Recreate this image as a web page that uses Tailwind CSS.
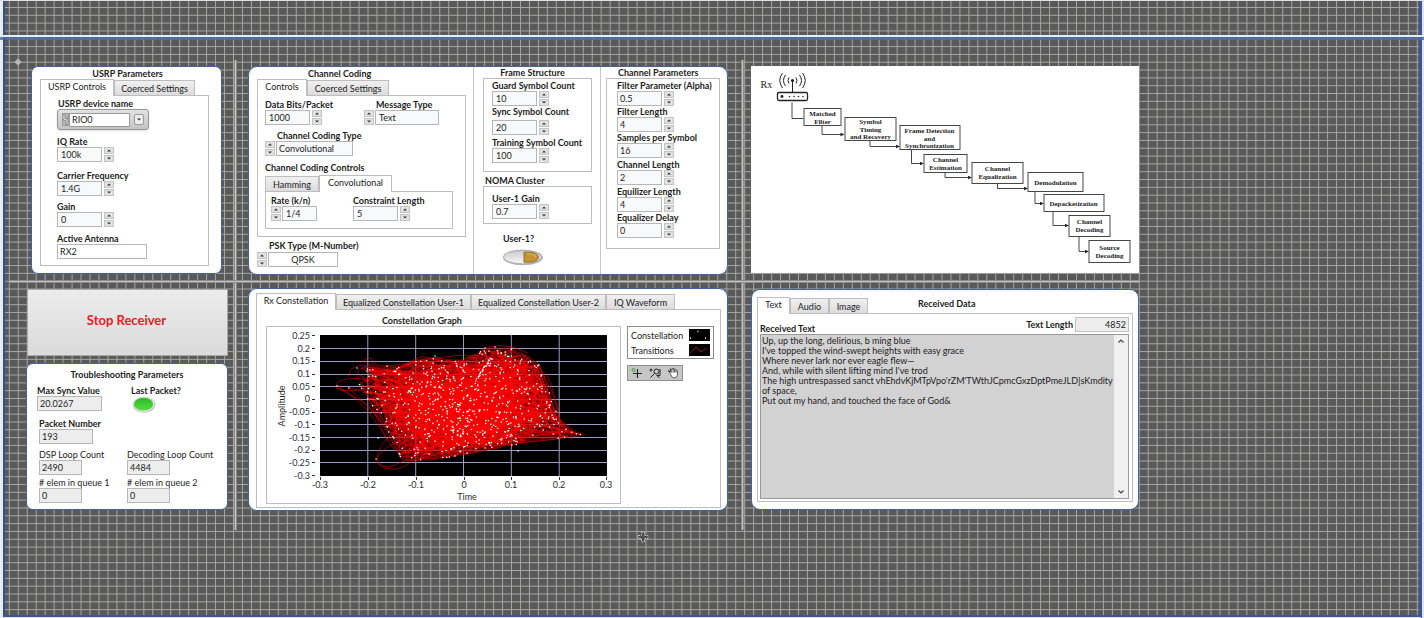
<!DOCTYPE html>
<html lang="en">
<head>
<meta charset="utf-8">
<title>NOMA Receiver</title>
<script src="https://cdn.jsdelivr.net/npm/@tailwindcss/browser@4"></script>
</head>
<body class="relative min-h-screen overflow-x-hidden bg-[#595959] font-['Lato','Open_Sans',sans-serif] text-[9px] leading-[11px] text-[#1c1c1c]">

<!-- front panel grid -->
<svg id="grid" class="absolute inset-0 h-full w-full" aria-hidden="true">
  <path id="gridLines" stroke="#a6a6a4" stroke-width="1" fill="none"/>
</svg>
<div class="absolute inset-y-0 left-0 w-[3px] bg-[#e9ebee]" aria-hidden="true"></div>
<div class="absolute inset-y-0 left-[3px] w-[2px] bg-[#34508f]" aria-hidden="true"></div>
<div class="absolute inset-y-0 right-0 w-[2px] bg-[#dfe3ea]" aria-hidden="true"></div>
<div class="absolute inset-y-0 right-[2px] w-[3px] bg-[#3d5796]" aria-hidden="true"></div>
<div class="absolute inset-x-0 top-0 h-px bg-[#dcdfe3]" aria-hidden="true"></div>
<div class="absolute inset-x-0 top-[35px] h-[5px] border-t-2 border-[#e6efff] bg-[#4a66a4]/80" aria-hidden="true"></div>
<div class="absolute inset-x-[3px] bottom-0 h-[3px] border-b border-[#dfe3ea] bg-[#3d5796]" aria-hidden="true"></div>

<svg class="absolute left-[14px] top-[58px] h-[8px] w-[8px]" viewBox="0 0 8 8" aria-hidden="true"><path d="M4 0.5L7.5 4L4 7.5L0.5 4Z" fill="#b9bbbb"/></svg>

<svg class="hidden" aria-hidden="true">
  <symbol id="up" viewBox="0 0 8 5"><path d="M2 3.500L4 1.500L6 3.500Z" fill="#333"/></symbol>
  <symbol id="dn" viewBox="0 0 8 5"><path d="M2 1.500L4 3.500L6 1.500Z" fill="#333"/></symbol>
</svg>

<main class="relative grid grid-cols-[209fr_3px_504fr_3px_395fr_285fr] grid-rows-[220px_3px_247px] pt-[60px] pl-[25px]">
  <div class="col-start-2 row-span-3 row-start-1 border-x border-[#8b8b8b] bg-[#c4c4c4]" aria-hidden="true"></div>
  <div class="col-start-4 row-span-3 row-start-1 border-x border-[#8b8b8b] bg-[#c4c4c4]" aria-hidden="true"></div>
  <div class="col-span-5 col-start-1 row-start-2 -ml-[16px] border-y border-[#8b8b8b] bg-[#c4c4c4]" aria-hidden="true"></div>

  <!-- USRP parameters -->
  <section class="col-start-1 row-start-1 pt-[6px] pr-[12px] pl-[6px]">
    <div class="h-[208px] rounded-[7px] border border-[#4562a0] bg-white px-[8px] pt-px">
      <h2 class="pl-[2px] text-center font-bold">USRP Parameters</h2>
      <div class="flex items-end" role="tablist">
        <button role="tab" aria-selected="true" class="relative z-10 -mb-px h-[17px] w-[74px] border border-b-0 border-[#bdbdbd] bg-white pb-[3px]">USRP Controls</button>
        <button role="tab" class="h-[15px] w-[81px] border border-b-0 border-[#bdbdbd] bg-linear-to-b from-[#f0f0f0] to-[#dcdcdc]">Coerced Settings</button>
      </div>
      <div class="mr-[4px] h-[171px] border border-[#bdbdbd] pt-[2px] pl-[16px]">
        <label for="dev" class="block pl-px font-bold">USRP device name</label>
        <div class="flex h-[21px] w-[92px] items-center rounded-[3px] border border-[#969696] bg-linear-to-b from-[#e2e2e2] to-[#c4c4c4] pl-[4px] shadow">
          <svg class="h-[13px] w-[8px]" viewBox="0 0 8 13" aria-hidden="true"><rect width="8" height="13" fill="#9b9b9b"/><path d="M2 2v4l3 1v4M5 1v3M2 8v4" stroke="#d8d8d8" fill="none"/></svg>
          <input id="dev" value="RIO0" class="h-[14px] w-[60px] border border-l-0 border-[#9c9c9c] bg-white pl-[2px]">
          <button aria-label="Choose device" class="ml-[4px] flex h-[11px] w-[10px] items-center justify-center rounded-[2px] border border-[#999] bg-[#eeeeee]"><svg class="h-[5px] w-[8px] shrink-0"><use href="#dn"/></svg></button>
        </div>
        <label for="iq" class="mt-[6px] block font-bold">IQ Rate</label>
        <div class="flex gap-[2px]"><input id="iq" value="100k" class="h-[15px] w-[45px] border border-[#b6b6b6] bg-[#f8f9fa] px-[3px]"><span data-spin></span></div>
        <label for="cf" class="mt-[8px] block font-bold">Carrier Frequency</label>
        <div class="flex gap-[2px]"><input id="cf" value="1.4G" class="h-[15px] w-[45px] border border-[#b6b6b6] bg-[#f8f9fa] px-[3px]"><span data-spin></span></div>
        <label for="gain" class="mt-[5px] block font-bold">Gain</label>
        <div class="flex gap-[2px]"><input id="gain" value="0" class="h-[15px] w-[45px] border border-[#b6b6b6] bg-[#f8f9fa] px-[3px]"><span data-spin></span></div>
        <label for="ant" class="mt-[6px] block font-bold">Active Antenna</label>
        <input id="ant" value="RX2" class="block h-[15px] w-[90px] border border-[#b6b6b6] bg-white px-[2px]">
      </div>
    </div>
  </section>

  <!-- Channel coding, frame structure, channel parameters -->
  <section class="col-start-3 row-start-1 pt-[6px] pr-[13px] pl-[11px]">
    <div class="grid h-[209px] grid-cols-[minmax(0,224fr)_minmax(0,127fr)_minmax(0,127fr)] rounded-[9px] border border-[#4562a0] bg-white">
      <div class="pt-px pr-[7px] pl-[8px]">
        <h2 class="pl-[51px] font-bold">Channel Coding</h2>
        <div class="flex items-end" role="tablist">
          <button role="tab" aria-selected="true" class="relative z-10 -mb-px h-[17px] w-[50px] border border-b-0 border-[#bdbdbd] bg-white pb-[3px]">Controls</button>
          <button role="tab" class="h-[15px] w-[82px] border border-b-0 border-[#bdbdbd] bg-linear-to-b from-[#f0f0f0] to-[#dcdcdc]">Coerced Settings</button>
        </div>
        <div class="h-[142px] border border-[#bdbdbd] pt-[3px] pl-[7px]">
          <div class="flex">
            <div class="w-[99px]">
              <label for="bits" class="block font-bold">Data Bits/Packet</label>
              <div class="flex gap-[2px]"><input id="bits" value="1000" class="h-[15px] w-[45px] border border-[#b6b6b6] bg-[#f8f9fa] px-[3px]"><span data-spin></span></div>
            </div>
            <div>
              <label for="msg" class="block pl-[12px] font-bold">Message Type</label>
              <div class="flex gap-px"><span data-spin></span><input id="msg" value="Text" class="h-[15px] w-[64px] border border-[#b6b6b6] bg-[#f8f9fa] px-[3px]"></div>
            </div>
          </div>
          <label for="ctype" class="mt-[5px] block pl-[12px] font-bold">Channel Coding Type</label>
          <div class="flex gap-px"><span data-spin></span><input id="ctype" value="Convolutional" class="h-[15px] w-[77px] border border-[#b6b6b6] bg-[#f8f9fa] px-[2px]"></div>
          <h3 class="mt-[6px] font-bold">Channel Coding Controls</h3>
          <div class="mt-[2px] flex items-end" role="tablist">
            <button role="tab" class="h-[15px] w-[54px] border border-b-0 border-[#bdbdbd] bg-linear-to-b from-[#f0f0f0] to-[#dcdcdc]">Hamming</button>
            <button role="tab" aria-selected="true" class="relative z-10 -mb-px h-[17px] w-[73px] border border-b-0 border-[#bdbdbd] bg-white pb-[3px]">Convolutional</button>
          </div>
          <div class="mr-[12px] flex h-[38px] border border-[#bdbdbd] pt-[3px] pl-[5px]">
            <div class="w-[82px]">
              <label for="rate" class="block font-bold">Rate (k/n)</label>
              <div class="flex gap-px"><span data-spin></span><input id="rate" value="1/4" class="h-[15px] w-[35px] border border-[#b6b6b6] bg-[#f8f9fa] px-[3px]"></div>
            </div>
            <div>
              <label for="cl" class="block font-bold">Constraint Length</label>
              <div class="flex gap-[2px]"><input id="cl" value="5" class="h-[15px] w-[45px] border border-[#b6b6b6] bg-[#f8f9fa] px-[3px]"><span data-spin></span></div>
            </div>
          </div>
        </div>
        <label for="psk" class="mt-[3px] block pl-[12px] font-bold">PSK Type (M-Number)</label>
        <div class="mt-px flex gap-px"><span data-spin></span><input id="psk" value="QPSK" class="h-[15px] w-[70px] border border-[#b6b6b6] bg-white text-center"></div>
      </div>

      <div class="border-l border-[#c6c6c6] pr-[8px] pl-[9px]">
        <h2 class="pr-[10px] text-center font-bold">Frame Structure</h2>
        <div class="h-[94px] border border-[#bdbdbd] pt-px pl-[8px]">
          <label for="guard" class="block font-bold">Guard Symbol Count</label>
          <div class="flex gap-[2px]"><input id="guard" value="10" class="h-[15px] w-[45px] border border-[#b6b6b6] bg-[#f8f9fa] px-[3px]"><span data-spin></span></div>
          <label for="sync" class="block font-bold">Sync Symbol Count</label>
          <div class="mt-[3px] flex gap-[2px]"><input id="sync" value="20" class="h-[15px] w-[45px] border border-[#b6b6b6] bg-[#f8f9fa] px-[3px]"><span data-spin></span></div>
          <label for="train" class="mt-[2px] block whitespace-nowrap font-bold">Training Symbol Count</label>
          <div class="flex gap-[2px]"><input id="train" value="100" class="h-[15px] w-[45px] border border-[#b6b6b6] bg-[#f8f9fa] px-[3px]"><span data-spin></span></div>
        </div>
        <h2 class="mt-[3px] pl-[2px] font-bold">NOMA Cluster</h2>
        <div class="h-[38px] border border-[#bdbdbd] pt-[6px] pl-[8px]">
          <label for="ug" class="block font-bold">User-1 Gain</label>
          <div class="flex gap-[2px]"><input id="ug" value="0.7" class="h-[15px] w-[45px] border border-[#b6b6b6] bg-[#f8f9fa] px-[3px]"><span data-spin></span></div>
        </div>
        <div class="mt-[9px] pl-[20px] font-bold" id="u1">User-1?</div>
        <button aria-labelledby="u1" class="mt-[5px] ml-[19px] block">
          <svg class="h-[17px] w-[42px]" viewBox="0 0 42 17">
            <defs><linearGradient id="tg" x1="0" y1="0" x2="0" y2="1"><stop offset="0" stop-color="#c9c9c9"/><stop offset="1" stop-color="#f7f7f7"/></linearGradient></defs>
            <ellipse cx="21" cy="8.500" rx="20" ry="7.800" fill="#b5b5b5"/>
            <ellipse cx="20.500" cy="8" rx="19" ry="6.800" fill="url(#tg)" stroke="#999" stroke-width=".6"/>
            <path d="M22 3.200H27C33 3.200 36.500 5.500 36.500 8.200S33 13.200 27 13.200H22Z" fill="#c3942f" stroke="#775e2b" stroke-width=".8"/>
            <path d="M25 5h3c4 0 5.500 1.500 5.500 3.200" fill="none" stroke="#e2b960" stroke-width="1.200"/>
          </svg>
        </button>
      </div>

      <div class="border-l border-[#c6c6c6] pr-[7px] pl-[5px]">
        <h2 class="pl-[12px] font-bold">Channel Parameters</h2>
        <div class="h-[171px] border border-[#bdbdbd] pt-px pl-[10px]">
          <label for="p1" class="block whitespace-nowrap font-bold">Filter Parameter (Alpha)</label>
          <div class="flex gap-[2px]"><input id="p1" value="0.5" class="h-[15px] w-[45px] border border-[#b6b6b6] bg-[#f8f9fa] px-[2px]"><span data-spin></span></div>
          <label for="p2" class="block font-bold">Filter Length</label>
          <div class="flex gap-[2px]"><input id="p2" value="4" class="h-[15px] w-[45px] border border-[#b6b6b6] bg-[#f8f9fa] px-[2px]"><span data-spin></span></div>
          <label for="p3" class="block font-bold">Samples per Symbol</label>
          <div class="flex gap-[2px]"><input id="p3" value="16" class="h-[15px] w-[45px] border border-[#b6b6b6] bg-[#f8f9fa] px-[2px]"><span data-spin></span></div>
          <label for="p4" class="mt-px block font-bold">Channel Length</label>
          <div class="flex gap-[2px]"><input id="p4" value="2" class="h-[15px] w-[45px] border border-[#b6b6b6] bg-[#f8f9fa] px-[2px]"><span data-spin></span></div>
          <label for="p5" class="mt-px block font-bold">Equilizer Length</label>
          <div class="flex gap-[2px]"><input id="p5" value="4" class="h-[15px] w-[45px] border border-[#b6b6b6] bg-[#f8f9fa] px-[2px]"><span data-spin></span></div>
          <label for="p6" class="block font-bold">Equalizer Delay</label>
          <div class="flex gap-[2px]"><input id="p6" value="0" class="h-[15px] w-[45px] border border-[#b6b6b6] bg-[#f8f9fa] px-[2px]"><span data-spin></span></div>
        </div>
      </div>
    </div>
  </section>

  <!-- Receiver chain diagram -->
  <section class="col-start-5 row-start-1 pt-[6px] pl-[7px]">
    <svg class="h-[207px] w-full bg-white font-['Liberation_Serif',serif]" viewBox="751 66 387 207" fill="none" stroke="#333" stroke-width=".9">
      <g fill="#222" stroke="none">
        <text x="760" y="88" class="text-[10px]">Rx</text>
        <circle cx="792" cy="80.500" r="1.600"/>
        <circle cx="781.500" cy="96.500" r="1.400"/><circle cx="789" cy="96.500" r=".8"/><circle cx="793.500" cy="96.500" r=".8"/><circle cx="798" cy="96.500" r=".8"/><circle cx="802.500" cy="96.500" r=".8"/>
      </g>
      <g stroke="#222" stroke-width="1">
        <path d="M792 81V92M788.500 77.500q-2 3 0 6M795.500 77.500q2 3 0 6M785 75q-4 5.500 0 11M799 75q4 5.500 0 11M782 73q-5.500 7.500 0 15M802 73q5.500 7.500 0 15"/>
        <rect x="777" y="92.500" width="30" height="8" rx="1.500" stroke-width="1.300"/>
      </g>
      <path d="M791.500 102.500V118.500H803M821.500 126V134.500H842M869.500 141V146.500H897M911 150V163.500H921M944.500 173V177.500H969M997 184V188.500H1025M1034.500 192V203.500H1041M1052.500 212V225.500H1066M1078.500 237V251.500H1086"/>
      <path fill="#222" stroke="none" d="M844 134.500l-4-1.800v3.600zM899.500 146.500l-4-1.800v3.600zM923.500 163.500l-4-1.800v3.600zM971.500 177.500l-4-1.800v3.600zM1027.500 188.500l-4-1.800v3.600zM1043.500 203.500l-4-1.800v3.600zM1068.500 225.500l-4-1.800v3.600zM1088.500 251.500l-4-1.800v3.600z"/>
      <g fill="#fff">
        <rect x="803.500" y="108.500" width="37" height="17"/><rect x="844.500" y="117.500" width="51" height="23"/><rect x="899.500" y="125.500" width="60" height="24"/>
        <rect x="923.500" y="154.500" width="43" height="18"/><rect x="971.500" y="162.500" width="51" height="21"/><rect x="1027.500" y="172.500" width="55" height="19"/>
        <rect x="1043.500" y="194.500" width="60" height="17"/><rect x="1068.500" y="215.500" width="41" height="21"/><rect x="1088.500" y="240.500" width="41" height="22"/>
      </g>
      <g fill="#222" stroke="none" text-anchor="middle" class="text-[7px] font-bold">
        <text x="822" y="116">Matched</text><text x="822" y="124">Filter</text>
        <text x="870" y="124">Symbol</text><text x="870" y="132">Timing</text><text x="870" y="139">and Recovery</text>
        <text x="929" y="133">Frame Detection</text><text x="929" y="141">and</text><text x="929" y="148">Synchronization</text>
        <text x="945" y="162">Channel</text><text x="945" y="170">Estimation</text>
        <text x="997" y="171">Channel</text><text x="997" y="179">Equalization</text>
        <text x="1055" y="185">Demodulation</text><text x="1073" y="206">Depacketization</text>
        <text x="1089" y="224">Channel</text><text x="1089" y="232">Decoding</text>
        <text x="1109" y="250">Source</text><text x="1109" y="258">Decoding</text>
      </g>
    </svg>
  </section>

  <!-- Stop button and troubleshooting -->
  <section class="col-start-1 row-start-3 flex flex-col gap-[7px] pt-[6px] pr-[6px]">
    <button class="ml-[2px] h-[67px] border border-[#a9a9a9] bg-linear-to-b from-[#ececec] to-[#dadada] pr-[2px] pb-[4px] text-[13px] font-bold text-[#e81c24]">Stop Receiver</button>
    <div class="ml-px h-[147px] rounded-[7px] border border-[#4562a0] bg-white px-[10px] pt-[5px]">
      <h2 class="text-center font-bold">Troubleshooting Parameters</h2>
      <div class="mt-[5px] grid grid-cols-[94px_1fr]">
        <div>
          <label for="ms" class="block font-bold">Max Sync Value</label>
          <input id="ms" readonly value="20.0267" class="block h-[15px] w-[65px] border border-[#b6b6b6] bg-[#ededee] px-[2px]">
        </div>
        <div>
          <div class="font-bold" id="lp">Last Packet?</div>
          <svg role="img" aria-labelledby="lp" class="ml-px h-[17px] w-[24px]" viewBox="0 0 24 17">
            <defs><linearGradient id="led" x1="0" y1="0" x2="0" y2="1"><stop offset="0" stop-color="#2fb52a"/><stop offset="1" stop-color="#55e03f"/></linearGradient></defs>
            <ellipse cx="12" cy="8.800" rx="11.500" ry="8" fill="#c9cdc9"/><ellipse cx="11.500" cy="8.200" rx="10" ry="6.900" fill="url(#led)" stroke="#eef5ee" stroke-width=".8"/>
          </svg>
        </div>
      </div>
      <div class="pl-[2px]">
        <label for="pn" class="mt-[5px] block font-bold">Packet Number</label>
        <input id="pn" readonly value="193" class="block h-[15px] w-[54px] border border-[#b6b6b6] bg-[#ededee] px-[2px]">
        <div class="mt-[5px] grid grid-cols-[88px_1fr] gap-y-[2px]">
          <div><label for="dl" class="block whitespace-nowrap">DSP Loop Count</label><input id="dl" readonly value="2490" class="block h-[15px] w-[43px] border border-[#b6b6b6] bg-[#ededee] px-[2px]"></div>
          <div><label for="el" class="block whitespace-nowrap">Decoding Loop Count</label><input id="el" readonly value="4484" class="block h-[15px] w-[43px] border border-[#b6b6b6] bg-[#ededee] px-[2px]"></div>
          <div><label for="q1" class="block whitespace-nowrap"># elem in queue 1</label><input id="q1" readonly value="0" class="block h-[15px] w-[43px] border border-[#b6b6b6] bg-[#ededee] px-[2px]"></div>
          <div><label for="q2" class="block whitespace-nowrap"># elem in queue 2</label><input id="q2" readonly value="0" class="block h-[15px] w-[43px] border border-[#b6b6b6] bg-[#ededee] px-[2px]"></div>
        </div>
      </div>
    </div>
  </section>

  <!-- Constellation -->
  <section class="col-start-3 row-start-3 pt-[5px] pr-[13px] pl-[11px]">
    <div class="h-[223px] rounded-[9px] border border-[#4562a0] bg-white pt-[4px] pr-[6px] pl-[7px]">
      <div class="flex items-end whitespace-nowrap" role="tablist">
        <button role="tab" aria-selected="true" class="relative z-10 -mb-px h-[17px] w-[80px] border border-b-0 border-[#bdbdbd] bg-white pb-[3px]">Rx Constellation</button>
        <button role="tab" class="h-[15px] w-[135px] border border-b-0 border-[#bdbdbd] bg-linear-to-b from-[#f0f0f0] to-[#dcdcdc]">Equalized Constellation User-1</button>
        <button role="tab" class="h-[15px] w-[135px] border border-b-0 border-[#bdbdbd] bg-linear-to-b from-[#f0f0f0] to-[#dcdcdc]">Equalized Constellation User-2</button>
        <button role="tab" class="h-[15px] w-[69px] border border-b-0 border-[#bdbdbd] bg-linear-to-b from-[#f0f0f0] to-[#dcdcdc]">IQ Waveform</button>
      </div>
      <div class="flex h-[199px] gap-[6px] border border-[#bdbdbd] pt-[5px] pl-[9px]">
        <div>
          <h2 class="pl-[116px] font-bold">Constellation Graph</h2>
          <svg class="h-[178px] w-[355px] border border-[#bdbdbd]" viewBox="267 326 353 176">
            <rect x="320" y="334" width="287" height="141" fill="#000"/>
            <path d="M367.800 334V475M415.700 334V475M463.500 334V475M511.300 334V475M559.200 334V475M320 347.500H607M320 360.500H607M320 373.500H607M320 385.500H607M320 398.500H607M320 411.500H607M320 423.500H607M320 436.500H607M320 449.500H607M320 461.500H607" stroke="#9a9ac6" stroke-width="1"/>
            <path id="base" fill="#8c0000" fill-opacity=".55"/>
            <path id="trans" fill="none" stroke="#ff0004" stroke-width=".5"/>
            <path id="pts" fill="none" stroke="#fff" stroke-width="1.500" stroke-linecap="round"/>
            <path d="M312 334.500h3M312 347.500h3M312 360.500h3M312 373.500h3M312 385.500h3M312 398.500h3M312 411.500h3M312 423.500h3M312 436.500h3M312 449.500h3M312 461.500h3M312 474.500h3M320.500 476v3M368.500 476v3M416.500 476v3M464.500 476v3M511.500 476v3M559.500 476v3M606.500 476v3" stroke="#333"/>
            <g class="text-[9px]" fill="#2b3040" text-anchor="end">
              <text x="310" y="338">0.25</text><text x="310" y="351">0.2</text><text x="310" y="363">0.15</text><text x="310" y="376">0.1</text><text x="310" y="389">0.05</text><text x="310" y="401">0</text><text x="310" y="414">-0.05</text><text x="310" y="427">-0.1</text><text x="310" y="440">-0.15</text><text x="310" y="452">-0.2</text><text x="310" y="465">-0.25</text><text x="310" y="478">-0.3</text>
            </g>
            <g class="text-[9px]" fill="#2b2b2b" text-anchor="middle">
              <text x="320" y="487">-0.3</text><text x="368" y="487">-0.2</text><text x="416" y="487">-0.1</text><text x="464" y="487">0</text><text x="511" y="487">0.1</text><text x="559" y="487">0.2</text><text x="606" y="487">0.3</text>
              <text x="467" y="499">Time</text>
              <text transform="translate(285 405) rotate(-90)">Amplitude</text>
            </g>
          </svg>
        </div>
        <div class="pt-[11px]">
          <div class="flex h-[33px] w-[87px] flex-col justify-center gap-[3px] border border-[#8b8b8b] pr-[3px] pl-[3px]">
            <div class="flex items-center justify-between">Constellation<svg class="h-[12px] w-[21px] bg-black" viewBox="0 0 21 12"><path d="M1 9h1M8.500 2.500h1M16 9h1" stroke="#fff" stroke-width="1.300"/></svg></div>
            <div class="flex items-center justify-between">Transitions<svg class="h-[12px] w-[21px] bg-black" viewBox="0 0 21 12"><path d="M1 9L7 3L12 8L18 4" fill="none" stroke="#8a1515"/></svg></div>
          </div>
          <div class="mt-[6px] flex h-[16px] w-[56px] items-center justify-around border border-[#8f8f8f] bg-[#c6c6c6]">
            <button aria-label="Cursor"><svg class="h-[12px] w-[12px]" viewBox="0 0 12 12"><path d="M6.500 2V11M2 6.500H11" stroke="#222" stroke-width="1.100"/><circle cx="2.500" cy="3" r="1.500" fill="none" stroke="#3c9a3c"/></svg></button>
            <button aria-label="Zoom"><svg class="h-[12px] w-[12px]" viewBox="0 0 12 12" fill="none" stroke="#222"><circle cx="7.500" cy="4.500" r="2.500"/><path d="M5.500 6.500L1.500 10.500M0.500 3H3.500M2 1.500V4.500M7.500 8.500L10.500 10.500M11 2V8.500H8"/></svg></button>
            <button aria-label="Pan"><svg class="h-[12px] w-[12px]" viewBox="0 0 12 12"><path d="M3 6L1.500 4.500Q2 3.500 3.500 5L3.300 2.500Q4.200 1.500 4.700 2.800Q5 1 6 1.800Q7 1 7.500 2.500Q8.800 1.500 9 3Q10.500 3 10.500 5V7.500Q10 11 7 11Q4.500 11 3 6Z" fill="#fff" stroke="#222" stroke-width=".7"/><path d="M1 3.500L3.500 5M3.300 1.500L4.800 5.500M6.200 1.500V5.500M7.700 2.500V5.500M9 3.500V5.500" stroke="#222" stroke-width=".8"/></svg></button>
          </div>
        </div>
      </div>
    </div>
  </section>

  <!-- Received data -->
  <section class="col-start-5 row-start-3 pt-[6px] pl-[7px]">
    <div class="h-[221px] rounded-[9px] border border-[#4562a0] bg-white px-[5px] pt-[7px]">
      <div class="flex items-end" role="tablist">
        <button role="tab" aria-selected="true" class="relative z-10 -mb-px h-[17px] w-[33px] border border-b-0 border-[#bdbdbd] bg-white pb-[3px]">Text</button>
        <button role="tab" class="h-[15px] w-[39px] border border-b-0 border-[#bdbdbd] bg-linear-to-b from-[#f0f0f0] to-[#dcdcdc]">Audio</button>
        <button role="tab" class="h-[15px] w-[39px] border border-b-0 border-[#bdbdbd] bg-linear-to-b from-[#f0f0f0] to-[#dcdcdc]">Image</button>
        <h2 class="mb-[4px] ml-[50px] font-bold">Received Data</h2>
      </div>
      <div class="h-[189px] border border-[#bdbdbd] pt-[3px] pr-[3px] pl-[2px]">
        <div class="flex items-end justify-between">
          <label for="rt" class="font-bold">Received Text</label>
          <div class="mb-[2px] flex items-center gap-[2px]">
            <label for="tl" class="font-bold">Text Length</label>
            <input id="tl" readonly value="4852" class="h-[15px] w-[54px] border border-[#c2c2c2] bg-[#ededee] px-[2px] text-right">
          </div>
        </div>
        <div class="flex h-[165px] border border-[#9a9a9a] bg-[#d2d2d2]">
          <textarea id="rt" readonly class="h-full min-w-0 flex-1 resize-none overflow-hidden pt-px pl-px leading-[10px]">Up, up the long, delirious, b ming blue
I've topped the wind-swept heights with easy grace
Where never lark nor ever eagle flew—
And, while with silent lifting mind I've trod
The high untrespassed sanct vhEhdvKjMTpVpo'rZM'TWthJCpmcGxzDptPmeJLD]sKmdity of space,
Put out my hand, and touched the face of God&amp;</textarea>
          <div class="flex w-[14px] flex-col items-center justify-between bg-[#f0f0f0] py-[3px]">
            <button aria-label="Scroll up"><svg class="h-[6px] w-[8px]" viewBox="0 0 8 6"><path d="M1.500 4.500L4 2L6.500 4.500" fill="none" stroke="#444" stroke-width="1.200"/></svg></button>
            <button aria-label="Scroll down"><svg class="h-[6px] w-[8px]" viewBox="0 0 8 6"><path d="M1.500 1.500L4 4L6.500 1.500" fill="none" stroke="#444" stroke-width="1.200"/></svg></button>
          </div>
        </div>
      </div>
    </div>
  </section>
</main>

<svg class="absolute left-[637px] top-[531px] h-[12px] w-[12px]" viewBox="0 0 12 12" aria-hidden="true"><path d="M4.500 1h3v3.500H11v3H7.500V11h-3V7.500H1v-3h3.500Z" fill="#4c4c4c" stroke="#d8d8d8" stroke-width=".8" stroke-dasharray="2 1"/></svg>

<script>
// increment / decrement pair used beside every numeric and ring control
document.querySelectorAll('[data-spin]').forEach(function (s) {
  s.className = 'flex w-[10px] flex-col gap-px';
  s.innerHTML =
    '<button aria-label="Increase" class="flex h-[7px] w-[10px] items-center justify-center border border-[#c4c4c4] bg-[#e2e2e2]"><svg class="h-[5px] w-[8px] shrink-0"><use href="#up"/></svg></button>' +
    '<button aria-label="Decrease" class="flex h-[7px] w-[10px] items-center justify-center border border-[#c4c4c4] bg-[#e2e2e2]"><svg class="h-[5px] w-[8px] shrink-0"><use href="#dn"/></svg></button>';
});

// panel grid lines
(function () {
  var d = '', w = innerWidth, h = Math.max(innerHeight, document.body.scrollHeight);
  for (var x = 9.3; x < w; x += 8.968) d += 'M' + x.toFixed(2) + ' 0V' + h;
  for (var y = 7.5; y < h; y += 7.82) d += 'M0 ' + y.toFixed(2) + 'H' + w;
  document.getElementById('gridLines').setAttribute('d', d);
})();

// constellation points and the transitions between them
(function () {
  var seed = 20267;
  function rnd() { seed = (seed * 1664525 + 1013904223) % 4294967296; return seed / 4294967296; }
  var hull = [[345,386],[357,370],[368,362],[400,366],[414,358],[440,357],[464,359],[485,347],[510,347],[528,354],[540,364],[550,392],[558,416],[574,429],[588,434],[560,438],[530,441],[500,447],[470,453],[430,460],[402,460],[392,440],[378,412],[366,396]];
  function inside(x, y) {
    var c = false;
    for (var i = 0, j = hull.length - 1; i < hull.length; j = i++) {
      var a = hull[i], b = hull[j];
      if ((a[1] > y) !== (b[1] > y) && x < (b[0] - a[0]) * (y - a[1]) / (b[1] - a[1]) + a[0]) c = !c;
    }
    return c;
  }
  function pick() {
    for (;;) { var x = 340 + rnd() * 248, y = 345 + rnd() * 116; if (inside(x, y)) return [x, y]; }
  }
  function f(n) { return n.toFixed(1); }
  var t = '', p = '', prev = pick();
  for (var i = 0; i < 1900; i++) {
    var q = pick();
    if (Math.hypot(q[0] - prev[0], q[1] - prev[1]) > 90) continue;
    var mx = (prev[0] + q[0]) / 2 + (rnd() - .5) * 22, my = (prev[1] + q[1]) / 2 + (rnd() - .5) * 16;
    t += 'M' + f(prev[0]) + ' ' + f(prev[1]) + 'Q' + f(mx) + ' ' + f(my) + ' ' + f(q[0]) + ' ' + f(q[1]);
    if (i % 2 === 0) p += 'M' + f(q[0]) + ' ' + f(q[1]) + 'h.1';
    prev = q;
  }
  // outlying loops
  t += 'M402 440C380 446 370 462 384 465S400 455 420 460M395 430C372 450 372 466 390 468S410 455 430 456M370 380C350 374 336 380 336 385S352 392 372 386M338 384C350 398 366 396 380 420M337 387Q362 395 388 440M368 365Q350 362 348 376M366 390Q380 430 395 450M540 368Q556 392 562 428M545 372Q552 378 560 420M560 428Q575 428 571 440M480 350Q500 338 528 352M360 362Q370 352 376 362M415 360Q418 352 440 360';
  p += 'M337 385h.1M376 458h.1M378 437h.1M357 367h.1M367 370h.1M553 417h.1M518 450h.1M541 375h.1M485 347h.1M495 346h.1M435 355h.1';
  for (var k = 0; k < 24; k++) p += 'M' + f(476 + k * .58 + rnd() * 2) + ' ' + f(377 - k * .9 + rnd() * 2) + 'h.1';
  document.getElementById('base').setAttribute('d', 'M' + hull.slice(2, 22).join('L') + 'Z');
  document.getElementById('trans').setAttribute('d', t);
  document.getElementById('pts').setAttribute('d', p);
})();
</script>
</body>
</html>
